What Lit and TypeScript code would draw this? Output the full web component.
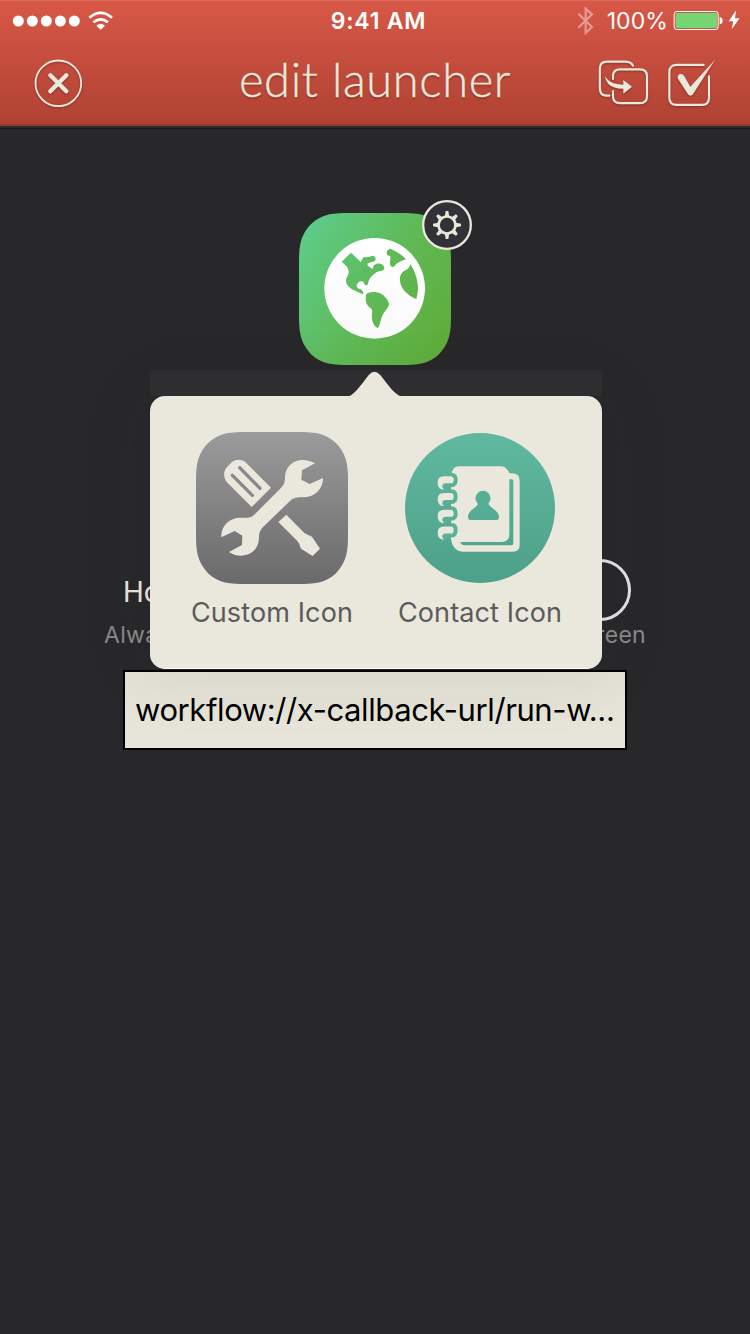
import { LitElement, html, css, svg } from "lit";
import { customElement } from "lit/decorators.js";

const SQUIRCLE =
  "M0 152 C0 108 1 76 28 42 C62 4 96 0 152 0 H304 C360 0 394 4 428 42 C455 76 456 108 456 152 V304 C456 360 452 388 420 424 C386 455 354 456 304 456 H152 C102 456 70 455 36 424 C4 388 0 360 0 304 Z";

@customElement("status-bar")
export class StatusBar extends LitElement {
  static styles = css`
    :host { display: grid; grid-template-columns: 1fr auto 1fr; align-items: center; height: 41px; color: #fff;
      font-family: Inter, "Liberation Sans", sans-serif; }
    .left { display: flex; padding-left: 12px; }
    .time { font-size: 23px; font-weight: 600; line-height: 28px; letter-spacing: 0.75px; padding-left: 7px; white-space: nowrap; }
    .right { display: flex; justify-content: flex-end; align-items: center; padding-right: 9px; }
    .pct { font-size: 23px; line-height: 28px; margin: 0 5px 0 13px; letter-spacing: 0.1px; }
    svg { display: block; }
  `;
  render() {
    return html`
      <div class="left">
        <svg width="102" height="20" viewBox="36 31 306 60" fill="#fff">
          ${[55, 97, 139, 181, 223].map((x) => svg`<circle cx=${x} cy="61" r="16.5" />`)}
          <path d="M302 87 L289 75 Q302 64 315 75 Z" />
          <path d="M280 65 Q302 47 324 65 M268 51 Q302 22 336 51" fill="none" stroke="#fff" stroke-width="8" />
        </svg>
      </div>
      <div class="time">9:41 AM</div>
      <div class="right">
        <svg width="17" height="28" viewBox="52 20 51 84">
          <path d="M56 40 L97 80 L78 98 V25 L97 42 L56 82" fill="none" stroke="#fff" stroke-opacity=".42" stroke-width="6.5" />
        </svg>
        <span class="pct">100%</span>
        <svg width="68" height="20" viewBox="340 33 204 60">
          <rect x="343.5" y="34.5" width="132" height="54" rx="8" fill="none" stroke="#fff" stroke-width="3" />
          <rect x="348" y="39" width="124" height="45" rx="4" fill="#76d672" />
          <path d="M480 51 Q489 53 489 62 Q489 71 480 73 Z M529 31 L507 64 H521 L516 88 L540 55 H526 Z" fill="#fff" />
        </svg>
      </div>
    `;
  }
}

@customElement("nav-bar")
export class NavBar extends LitElement {
  static styles = css`
    :host { display: grid; grid-template-columns: 1fr auto 1fr; align-items: center; height: 85px; color: #eae8dc; }
    .title { font-family: Lato, sans-serif; font-weight: 300; font-size: 47px; line-height: 56px; white-space: nowrap;
      letter-spacing: 0.65px; -webkit-text-stroke: 0.35px #eae8dc;
      text-shadow: 0 2px 2px rgba(0, 0, 0, 0.25); padding-bottom: 9px; }
    .back { padding-left: 34px; }
    .actions { display: flex; justify-content: flex-end; padding-right: 34px; }
    svg { display: block; filter: drop-shadow(0 1px 1px rgba(0, 0, 0, 0.3)); }
  `;
  render() {
    return html`
      <div class="back">
        <svg width="49" height="49" viewBox="102 178 147 147" fill="none" stroke="#eae8dc" stroke-linecap="round">
          <circle cx="175" cy="251" r="68.5" stroke-width="5.5" />
          <path d="M151 227 L199 275 M199 227 L151 275" stroke-width="13" />
        </svg>
      </div>
      <div class="title">edit launcher</div>
      <div class="actions">
        <svg width="118" height="49" viewBox="114 178 354 147" fill="none" stroke="#eae8dc" stroke-width="6.5" stroke-linecap="round">
          <path d="M148 288 H140 Q119.500 288 119.500 266 V208 Q119.500 186 141 186 H195 Q213 186 219 198" />
          <path d="M159 238 V230 Q159 209 180 209 H240 Q261 209 261 230 V289 Q261 310.500 240 310.500 H180 Q159 310.500 159 289 V274" />
          <path d="M135 230 C145 248 165 255 190 255 V241 L216 261 L190 282 V267 C158 268 138 255 135 230 Z" fill="#eae8dc" stroke="none" />
          <path d="M431 195.500 H350 Q328 195.500 328 218 V294 Q328 315.500 350 315.500 H426 Q447 315.500 447 294 V230" />
          <path d="M354 237 C349 224 366 216 373 230 L391 261 L465 180 L399 284 Q391 292 384 284 Z" fill="#eae8dc" stroke="none" />
        </svg>
      </div>
    `;
  }
}

@customElement("launcher-icon")
export class LauncherIcon extends LitElement {
  static styles = css`
    :host { display: block; position: relative; width: 152px; height: 152px; }
    svg { display: block; }
    .gear { position: absolute; left: 123px; top: -13px; }
  `;
  render() {
    return html`
      <svg width="152" height="152" viewBox="27 69 456 456">
        <defs>
          <linearGradient id="g" x1="0" y1=".2" x2="1" y2=".8">
            <stop offset="0" stop-color="#5dcb88" /><stop offset=".5" stop-color="#5fba58" /><stop offset="1" stop-color="#5fad3a" />
          </linearGradient>
          <linearGradient id="w" x1="0" y1="0" x2="0" y2="1">
            <stop offset="0" stop-color="#fff" /><stop offset="1" stop-color="#fafafa" />
          </linearGradient>
          <mask id="m">
            <circle cx="254" cy="295" r="151" fill="#fff" />
            <path d="M183 188 L155 215 C164 224 176 230 176 247 C176 257 168 262 168 274 C169 290 186 299 199 304 C208 308 213 312 218 312 C222 308 218 302 212 298 C204 297 200 292 200 286 C202 277 210 272 218 274 C223 277 220 282 228 286 C237 285 233 275 239 266 C246 256 257 247 267 244 C278 242 283 240 283 233 C281 224 272 219 260 221 C250 224 249 230 248 237 C240 231 232 228 232 221 C238 218 247 216 254 213 C259 208 257 199 249 198 C240 197 236 204 226 201 C216 201 218 209 212 216 Z" />
            <path d="M232 310 C250 302 275 308 284 320 C292 328 298 338 297 345 C293 357 281 366 276 379 C272 391 269 407 264 414 C254 412 246 398 246 382 C244 372 250 362 244 356 C232 350 227 338 227 325 C227 318 228 313 232 310 Z" />
            <path d="M299 176 C312 180 333 191 348 208 C336 212 325 216 318 223 C314 231 305 234 301 226 C297 216 304 208 300 198 C295 197 290 196 290 188 C290 182 294 178 299 176 Z" />
            <path d="M361 223 C373 240 383 265 384 295 C384 308 381 318 379 327 C360 320 339 303 333 285 C328 270 328 256 338 246 C348 239 356 240 361 223 Z" />
          </mask>
        </defs>
        <path transform="translate(27 69)" d=${SQUIRCLE} fill="url(#g)" />
        <rect x="100" y="140" width="310" height="310" fill="url(#w)" mask="url(#m)" />
      </svg>
      <svg class="gear" width="50" height="50" viewBox="396 30 150 150">
        <circle cx="471" cy="105" r="71.5" fill="#323138" stroke="#eae8dc" stroke-width="7" />
        <g fill="#eae8dc" transform="translate(471 105)">
          <circle r="25.500" fill="none" stroke="#eae8dc" stroke-width="8" />
          ${[0, 45, 90, 135, 180, 225, 270, 315].map((a) => svg`<path transform="rotate(${a})" d="M-6.500 -27 L-4 -42 H4 L6.500 -27 Z" />`)}
        </g>
      </svg>
    `;
  }
}

@customElement("icon-popover")
export class IconPopover extends LitElement {
  static styles = css`
    :host { display: block; width: 452px; }
    .top { height: 26px; background: #2f2f31; display: flex; justify-content: center; }
    .card { box-sizing: border-box; height: 273px; border-radius: 15px; background: #eae8dc; display: flex;
      border-bottom: 1px solid #fff; padding-top: 36px; box-shadow: 0 0 70px 10px rgba(40, 40, 36, 0.07); }
    .choice { display: flex; flex-direction: column; align-items: center; gap: 12px; width: 208px; color: #5b5b5b;
      font: 27px/34px Inter, "Liberation Sans", sans-serif; white-space: nowrap; letter-spacing: 0.13px; }
    .choice:first-child { margin-left: 18px; }
    svg { display: block; }
    .top svg { margin-right: 2px; }
  `;
  private ring(y: number) {
    return svg`<g transform="translate(0 ${y})">
      <path d="M164 209 Q160 196 170 196 H182 Q197 196 197 180 Q197 164 183 164" fill="none" stroke="url(#t)" stroke-width="12" />
      <path d="M190 180 C190 188 186 190 180 190 H168 Q157 190 157 199 Q157 205 162 209 Q143 208 143 188 Q143 169 162 169 H181 Q190 169 190 180 Z" fill="#eae8dc" />
    </g>`;
  }
  render() {
    return html`
      <div class="top">
        <svg width="52" height="26" viewBox="178 540 156 78">
          <path d="M178 618 C194 615 222 574 238 554 Q254 537 271 554 C288 574 315 615 334 618 Z" fill="#eae8dc" />
        </svg>
      </div>
      <div class="card">
        <div class="choice">
          <svg width="152" height="152" viewBox="48 36 456 456">
            <defs><linearGradient id="a" x1="0" y1="0" x2="0" y2="1"><stop offset="0" stop-color="#9b9b9b" /><stop offset="1" stop-color="#6a6a6a" /></linearGradient></defs>
            <path transform="translate(48 36)" d=${SQUIRCLE} fill="url(#a)" />
            <g fill="#eae8dc">
              <path d="M405 130 C391 122 379 120 368 120 C338 120 315 142 315 172 C315 188 312 196 300 207 L222 285 C211 295 200 293 180 293 C148 293 122 318 124 352 L164 333 L187 347 L186 375 L147 396 C160 405 172 407 182 407 C215 407 236 385 237 354 C237 338 240 330 250 320 L330 243 C342 232 350 232 372 232 C405 232 430 205 429 174 L389 192 L364 179 L366 151 Z" />
              <path d="M215 261 L141 187 C129 173 130 153 141 141 L153 129 C165 117 183 116 196 126 L273 203 Z" />
              <path d="M319 284 L373 339 Q385 346 396 350 L420 386 L398 408 L363 386 Q359 371 352 363 L295 306 Z" />
            </g>
            <path d="M157 166 L217 226 M179 143 L240 205" stroke="#898989" stroke-width="10" stroke-linecap="round" />
          </svg>
          <span>Custom Icon</span>
        </div>
        <div class="choice">
          <svg width="152" height="152" viewBox="42 36 456 456">
            <defs><linearGradient id="t" gradientUnits="userSpaceOnUse" x1="0" y1="39" x2="0" y2="489"><stop offset="0" stop-color="#60b99f" /><stop offset="1" stop-color="#4da089" /></linearGradient></defs>
            <circle cx="270" cy="264" r="225" fill="url(#t)" />
            <path d="M340 160 H366 Q389 160 389 182 V375 Q389 395 368 395 H218 C196 395 183 375 183 352 L250 200 Z" fill="#eae8dc" />
            <path d="M340 178 H365 Q370 178 370 184 V370 Q370 376 364 376 H224 Q214 376 211 366 L300 200 Z" fill="url(#t)" />
            <path d="M207 139 H333 Q350 139 358 160 V342 Q358 366 335 366 H192 L183 354 V165 Q187 139 207 139 Z" fill="#eae8dc" />
            ${[0, 50, 100.5, 150.5].map((y) => this.ring(y))}
            <g fill="url(#t)">
              <circle cx="279" cy="235" r="22.500" />
              <path d="M234 291 C234 270 258 266 265 250 H294 C302 266 326 270 327 291 Q327 300 319 300 H242 Q234 300 234 291 Z" />
            </g>
          </svg>
          <span>Contact Icon</span>
        </div>
      </div>
    `;
  }
}

@customElement("app-root")
export class AppRoot extends LitElement {
  static styles = css`
    :host { display: flex; flex-direction: column; height: 1334px; overflow: hidden; background: #28282a;
      font-family: Inter, "Liberation Sans", sans-serif; }
    header { background: linear-gradient(#d85847, #b04233); height: 124px; box-shadow: inset 0 1px #d9695b;
      border-bottom: 2px solid #8f392f; flex: none; }
    main { border-top: 2px solid #2b2b2b; box-shadow: inset 0 1px #19191a; display: flex; flex-direction: column; align-items: center; padding-top: 85px; }
    .anchor { position: relative; }
    .pop { position: absolute; top: 157px; left: -149px; z-index: 1; }
    .row { display: flex; justify-content: space-between; align-items: center; width: 508px; height: 62px; margin: 194px 0 0 4px; }
    .label { color: #eae8dc; font-size: 28px; padding-top: 3px; }
    .switch { box-sizing: border-box; width: 102px; height: 62px; border: 3px solid #e2e2e3; border-radius: 31px; }
    .hint { display: flex; justify-content: space-between; width: 542px; height: 28px; line-height: 28px; color: #8a8a8c; font-size: 23px; letter-spacing: 0.3px; }
    .field { box-sizing: border-box; width: 504px; height: 80px; margin-top: 21px; border: 2px solid #000;
      background: linear-gradient(#e4e2d6, #e8e6da); color: #000; font-size: 31px; line-height: 75px; letter-spacing: -0.4px; padding-left: 10px; white-space: nowrap; }
  `;
  render() {
    return html`
      <header><status-bar></status-bar><nav-bar></nav-bar></header>
      <main>
        <div class="anchor">
          <launcher-icon></launcher-icon>
          <icon-popover class="pop"></icon-popover>
        </div>
        <div class="row"><span class="label">Home</span><span class="switch"></span></div>
        <div class="hint"><span>Always</span><span>screen</span></div>
        <div class="field">workflow://x-callback-url/run-w...</div>
      </main>
    `;
  }
}
